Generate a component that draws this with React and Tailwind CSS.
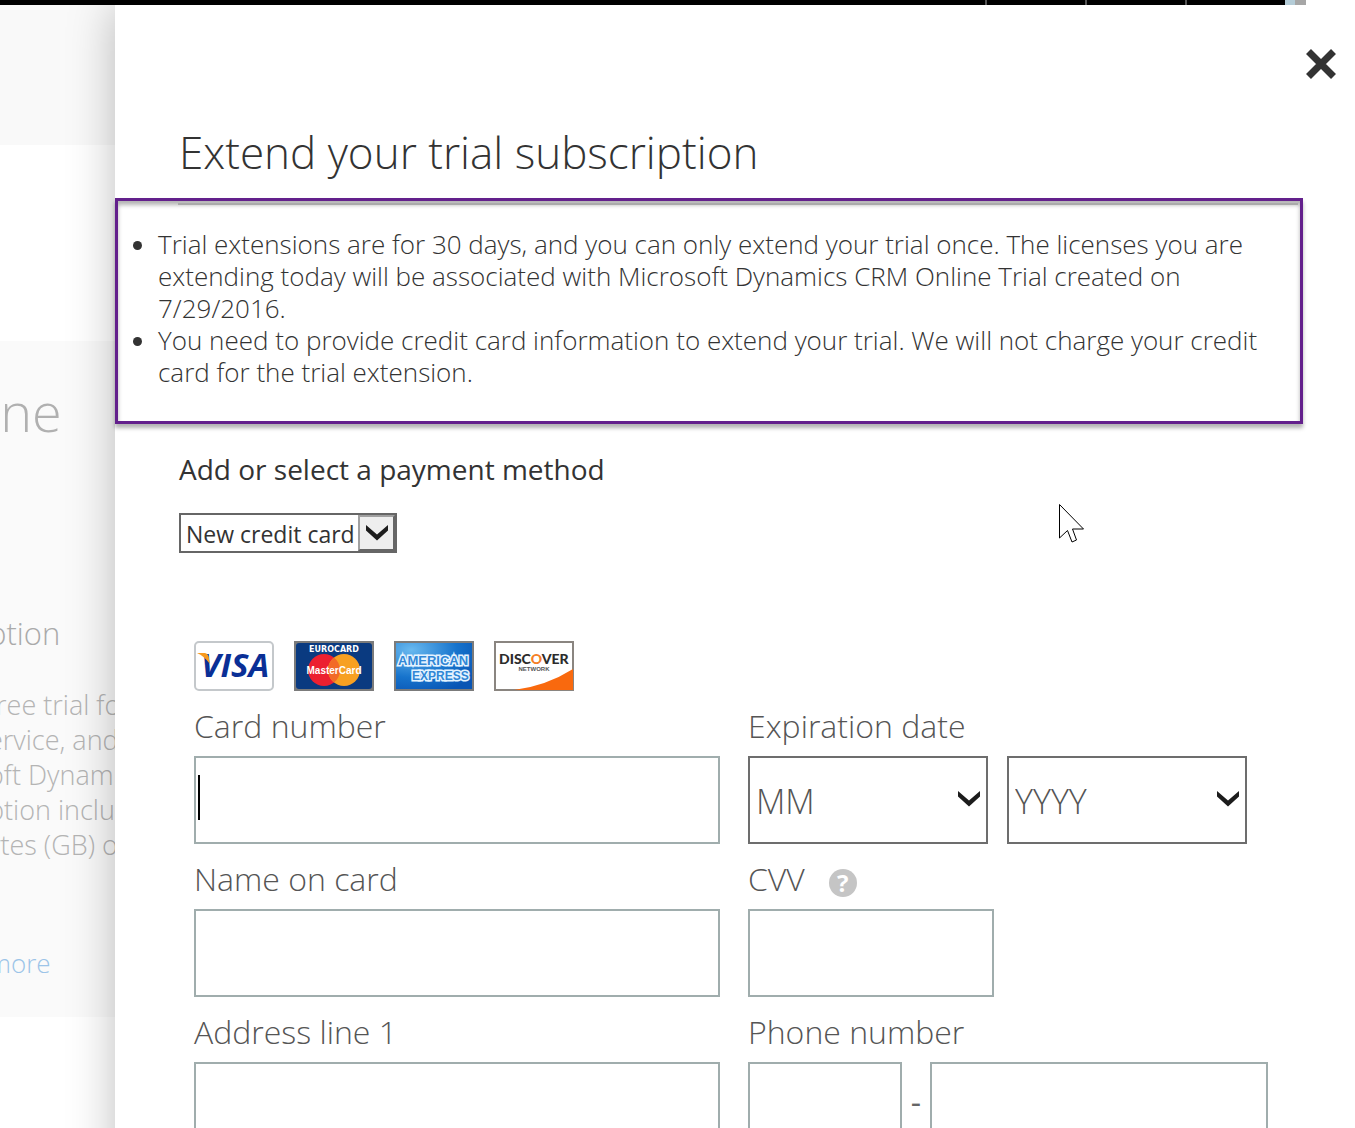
import React from "react";

const notices = [
  "Trial extensions are for 30 days, and you can only extend your trial once. The licenses you are extending today will be associated with Microsoft Dynamics CRM Online Trial created on 7/29/2016.",
  "You need to provide credit card information to extend your trial. We will not charge your credit card for the trial extension.",
];

const months = ["01", "02", "03", "04", "05", "06", "07", "08", "09", "10", "11", "12"];
const years = ["2016", "2017", "2018", "2019", "2020", "2021"];

const inputClass = "block h-22 w-full border-2 border-[#a0adad] bg-white px-2 text-[32px] text-[#333] outline-none";
const labelClass = "flex h-[65px] items-center pt-1 text-[32px] font-light text-[#555]";

export default function App() {
  return (
    <div className="relative flex h-screen flex-col overflow-hidden bg-white font-['Open_Sans',sans-serif] text-[#333]">
      <TopBar />
      <div className="flex min-h-0 flex-1 overflow-hidden">
        <Backdrop />
        <TrialPanel />
      </div>
      <Pointer />
    </div>
  );
}

const TopBar = () => (
  <div className="flex h-[5px] shrink-0 pr-[49px]">
    <div className="flex flex-1 justify-end bg-black">
      <div className="w-[100px] border-l-2 border-[#555]" />
      <div className="w-[100px] border-l-2 border-[#555]" />
      <div className="w-[100px] border-l-2 border-[#555]" />
    </div>
    <div className="w-[10px] bg-[#b4ccd7]" />
    <div className="w-[11px] bg-[#a6a6a6]" />
  </div>
);

// The dimmed subscriptions page that the panel slides over
const Backdrop = () => (
  <div className="w-[115px] shrink-0 overflow-hidden font-light whitespace-nowrap text-[#b4b4b4]">
    <div className="h-[140px] bg-[#f9f9f9]" />
    <div className="h-[196px]" />
    <div className="h-[676px] bg-[#fafafa] pt-7">
      <div className="-ml-3">
        <h2 className="text-[54px] leading-[84px] text-[#b0b0b0]">ine</h2>
        <h3 className="mt-[160px] text-[31px] leading-[40px] text-[#aaa]">ption</h3>
        <p className="mt-[34px] text-[27px] leading-[35px]">
          free trial for
          <br />
          ervice, and
          <br />
          oft Dynami
          <br />
          ption inclu
          <br />
          ytes (GB) o
        </p>
        <a href="#more" className="mt-[84px] block text-[26px] leading-[35px] text-[#9cc4e8]">
          more
        </a>
      </div>
    </div>
  </div>
);

const TrialPanel = () => (
  <main className="relative -mb-15 min-w-0 flex-1 bg-white shadow-[0_0_44px_rgba(0,0,0,0.26)]">
    <div className="flex h-[117px] items-start justify-end pt-[44px] pr-[19px]">
      <button type="button" aria-label="Close" className="cursor-pointer">
        <svg width="30" height="30" viewBox="0 0 30 30" fill="none" stroke="#333" strokeWidth="7">
          <path d="M2.5 2.5 27.5 27.5M27.5 2.5 2.5 27.5" />
        </svg>
      </button>
    </div>
    <h1 className="pl-16 text-[44px] leading-[60px] font-light">Extend your trial subscription</h1>

    <section className="mt-4 mr-[52px] h-[226px] border-3 border-[#63208c] shadow-[0_4px_4px_rgba(0,0,0,0.3),inset_0_4px_4px_rgba(0,0,0,0.3)]">
      <hr className="mt-[2px] mr-[2px] ml-15 border-t-2 border-[#aaa]" />
      <ul className="mt-[23px] mr-5 ml-10 list-disc text-[26px] leading-8 font-light">
        {notices.map((notice) => (
          <li key={notice}>{notice}</li>
        ))}
      </ul>
    </section>

    <div className="mt-6 pl-16">
      <label htmlFor="method" className="block text-[28px] leading-[42px]">
        Add or select a payment method
      </label>
      <div className="relative mt-[23px] w-[218px]">
        <select
          id="method"
          className="block h-10 w-full appearance-none border-2 border-[#666] bg-white pt-[2px] pl-[5px] text-[23px] outline-none"
        >
          <option>New credit card</option>
        </select>
        <span className="pointer-events-none absolute top-[2px] right-[2px] flex h-9 w-[37px] items-center justify-center border-2 border-[#a0a0a0] border-r-[#666] border-b-[#666] bg-[#eee]">
          <Chevron />
        </span>
      </div>
    </div>

    <form className="pt-[88px] pr-[87px] pl-[79px]">
      <div className="flex gap-5">
        <Visa />
        <MasterCard />
        <Amex />
        <Discover />
      </div>
      <div className="grid grid-cols-[526fr_520fr] gap-x-7">
        <div>
          <label htmlFor="number" className={labelClass}>
            Card number
          </label>
          <div className="relative">
            <input id="number" className={inputClass} />
            <span className="absolute top-[19px] left-1 h-[45px] w-[2px] bg-black" />
          </div>
        </div>
        <div>
          <label htmlFor="month" className={labelClass}>
            Expiration date
          </label>
          <div className="flex gap-[19px]">
            <DateSelect id="month" name="MM" options={months} />
            <DateSelect id="year" name="YYYY" options={years} />
          </div>
        </div>
        <div>
          <label htmlFor="name" className={labelClass}>
            Name on card
          </label>
          <input id="name" className={inputClass} />
        </div>
        <div>
          <div className="flex items-center gap-6">
            <label htmlFor="cvv" className={labelClass}>
              CVV
            </label>
            <button
              type="button"
              aria-label="About CVV"
              className="mt-3 flex size-7 items-center justify-center rounded-full bg-[#c5c5c5] text-[24px] leading-none font-bold text-white"
            >
              ?
            </button>
          </div>
          <div className="w-[246px]">
            <input id="cvv" className={inputClass} />
          </div>
        </div>
        <div>
          <label htmlFor="address" className={labelClass}>
            Address line 1
          </label>
          <input id="address" className={inputClass} />
        </div>
        <div>
          <label htmlFor="area" className={labelClass}>
            Phone number
          </label>
          <div className="flex items-center">
            <div className="w-[154px]">
              <input id="area" className={inputClass} />
            </div>
            <span className="w-7 pb-2 text-center text-[32px] leading-none text-[#666]">-</span>
            <div className="flex-1">
              <input aria-label="Phone number" className={inputClass} />
            </div>
          </div>
        </div>
      </div>
    </form>
  </main>
);

const DateSelect = ({ id, name, options }) => (
  <div className="relative w-60">
    <select
      id={id}
      aria-label={name}
      className="block h-22 w-full appearance-none border-2 border-[#6d6d6d] bg-white pt-[2px] pl-[6px] text-[34px] font-light text-[#555] outline-none"
    >
      <option>{name}</option>
      {options.map((option) => (
        <option key={option}>{option}</option>
      ))}
    </select>
    <span className="pointer-events-none absolute top-[35px] right-2">
      <Chevron />
    </span>
  </div>
);

const Chevron = () => (
  <svg width="22" height="16" viewBox="0 0 22 16" fill="#1c1c1c">
    <path d="M0 0 11 9.5 22 0V5.5L11 15.5 0 5.5Z" />
  </svg>
);

const Visa = () => (
  <svg width="80" height="50" viewBox="0 0 80 50" role="img" aria-label="Visa">
    <rect x="1" y="1" width="78" height="48" rx="4" fill="#fff" stroke="#c4c8cb" strokeWidth="2" />
    <text x="7" y="36" fill="#0a2f96" fontFamily="Open Sans" fontSize="33" fontWeight="700" fontStyle="italic">
      VISA
    </text>
    <path d="M3 12H11Q15 13 15 18L16 23Q10 15 3 12Z" fill="#f79a1f" />
  </svg>
);

const MasterCard = () => (
  <svg width="80" height="50" viewBox="0 0 80 50" role="img" aria-label="MasterCard">
    <rect width="80" height="50" fill="#7b7b7b" />
    <rect x="2" y="2" width="76" height="46" rx="3" fill="#0a3a80" />
    <circle cx="30" cy="29" r="16" fill="#ec2030" />
    <circle cx="50" cy="29" r="16" fill="#f7a021" />
    <path d="M40 16.500A16 16 0 0 1 40 41.500A16 16 0 0 1 40 16.500Z" fill="#f26a27" />
    <text x="40" y="11" textAnchor="middle" fill="#fff" fontFamily="DejaVu Sans" fontSize="8" fontWeight="700">
      EUROCARD
    </text>
    <text x="40" y="33" textAnchor="middle" fill="#fff" fontFamily="Liberation Sans" fontSize="10" fontWeight="700">
      MasterCard
    </text>
  </svg>
);

const Amex = () => (
  <svg width="80" height="50" viewBox="0 0 80 50" role="img" aria-label="American Express">
    <defs>
      <radialGradient id="amex" cx="0.2" cy="0.15" r="1">
        <stop offset="0" stopColor="#69b9ef" />
        <stop offset="0.6" stopColor="#1673cc" />
        <stop offset="1" stopColor="#0a55b4" />
      </radialGradient>
    </defs>
    <rect width="80" height="50" fill="#7b7b7b" />
    <rect x="2" y="2" width="76" height="46" fill="url(#amex)" />
    <g fill="#3187d6" stroke="#e4f3ff" strokeWidth="3" paintOrder="stroke" fontFamily="Liberation Sans" fontWeight="700">
      <text x="4" y="24" fontSize="13">
        AMERICAN
      </text>
      <text x="18" y="39" fontSize="12">
        EXPRESS
      </text>
    </g>
  </svg>
);

const Discover = () => (
  <svg width="80" height="50" viewBox="0 0 80 50" role="img" aria-label="Discover Network">
    <rect x="1" y="1" width="78" height="48" fill="#fff" stroke="#8a8580" strokeWidth="2" />
    <path d="M20 49Q52 45 79 28V49Z" fill="#f9690e" />
    <text x="5" y="23" fill="#2c2c2c" fontFamily="Lato" fontSize="14" fontWeight="900">
      DISC
      <tspan fill="#f58026">O</tspan>
      VER
    </text>
    <text x="40" y="30" textAnchor="middle" fill="#555" fontFamily="Liberation Sans" fontSize="6" fontWeight="700">
      NETWORK
    </text>
  </svg>
);

const Pointer = () => (
  <svg
    className="pointer-events-none absolute top-[503px] left-[1058px]"
    width="28"
    height="42"
    viewBox="0 0 28 42"
    fill="#fff"
    stroke="#000"
  >
    <path d="M1.500 1.500V35L9.500 27.500L14 39L18.500 37L14.500 26H25.500Z" />
  </svg>
);
